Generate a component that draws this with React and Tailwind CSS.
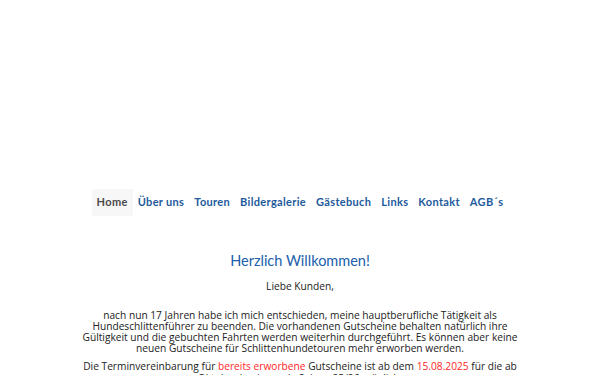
export default function App() {
  const items = ["Über uns", "Touren", "Bildergalerie", "Gästebuch", "Links", "Kontakt", "AGB´s"];
  return (
    <div className="w-[600px] h-[375px] overflow-hidden bg-white" style={{ fontFamily: '"Open Sans", sans-serif' }}>
      <div className="h-[189px]" />
      <nav className="flex justify-center items-center text-[11px] font-bold tracking-[0.03em]" style={{ fontFamily: 'Lato, sans-serif' }}>
        <span className="px-[5px] h-[27px] flex items-center bg-[#f7f7f7] text-[#4a4a4a]">Home</span>
        {items.map((t) => (
          <span key={t} className="px-[5px] h-[27px] flex items-center text-[#1d5a9c]">{t}</span>
        ))}
      </nav>
      <div className="w-[460px] mx-auto text-center">
        <h1 className="mt-[35px] text-[14.5px] leading-[20px] text-[#2060ac]" style={{ fontFamily: 'Lato, sans-serif' }}>Herzlich Willkommen!</h1>
        <p className="mt-[10px] text-[10.2px] leading-[11.5px] text-[#222]">Liebe Kunden,</p>
        <p className="mt-[17px] text-[10.2px] leading-[11.2px] text-[#222]">
          nach nun 17 Jahren habe ich mich entschieden, meine hauptberufliche Tätigkeit als Hundeschlittenführer zu beenden. Die vorhandenen Gutscheine behalten natürlich ihre Gültigkeit und die gebuchten Fahrten werden weiterhin durchgeführt. Es können aber keine neuen Gutscheine für Schlittenhundetouren mehr erworben werden.
        </p>
        <p className="mt-[7px] text-[10.2px] leading-[11.2px] text-[#222]">
          Die Terminvereinbarung für <span className="text-[#ff2626]">bereits erworbene</span> Gutscheine ist ab dem <span className="text-[#ff2626]">15.08.2025</span> für die ab Oktober beginnende Saison 25/26 möglich.
        </p>
      </div>
    </div>
  );
}
